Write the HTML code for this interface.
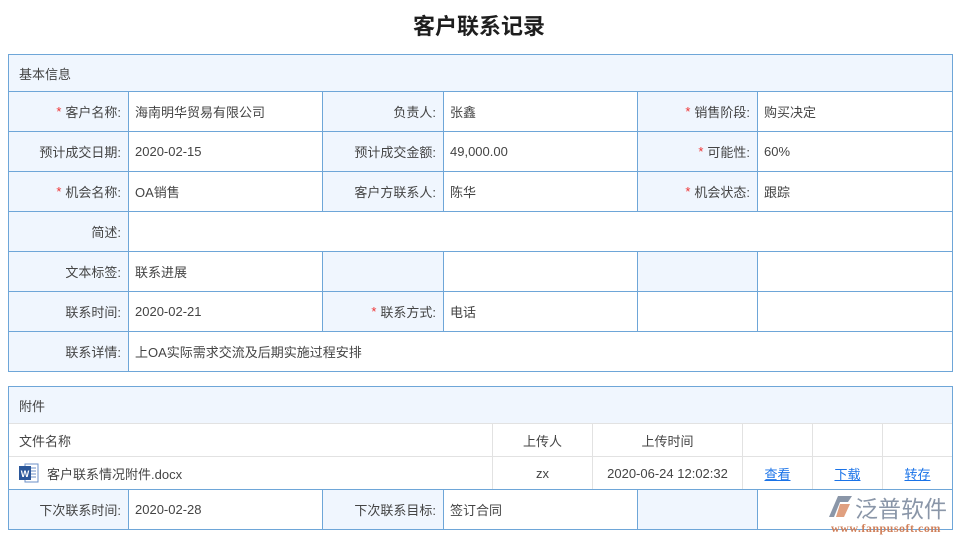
<!DOCTYPE html>
<html><head><meta charset="utf-8"><style>
*{margin:0;padding:0;box-sizing:border-box}
body{width:958px;height:541px;background:#fff;font-family:"Liberation Sans","Noto Sans CJK SC",sans-serif;font-size:13px;color:#444;position:relative;overflow:hidden}
.c{position:absolute;display:flex;align-items:center;white-space:nowrap}
.t{position:absolute;left:0;top:9px;width:958px;text-align:center;font-size:22px;font-weight:bold;color:#1e1e1e}
.box{position:absolute;border:1px solid #6ea6d8}
.lb{background:#f0f6fe;justify-content:flex-end;padding-right:7px}
.v{padding-left:7px}
.hl{position:absolute;height:1px;background:#6ea6d8}
.vl{position:absolute;width:1px;background:#6ea6d8}
.ghl{position:absolute;height:1px;background:#e2e2e2}
.gvl{position:absolute;width:1px;background:#e2e2e2}
.s{color:#e33;margin-right:4px}
a{color:#1a73e8;text-decoration:underline}
</style></head><body>
<div class="t">客户联系记录</div>

<div class="box" style="left:8px;top:54px;width:945px;height:318px"></div>
<div class="c" style="left:9px;top:55px;width:943px;height:36px;background:#f0f6fe;padding-left:10px">基本信息</div>
<div class="c lb" style="left:9px;top:92px;width:119px;height:279px"></div>
<div class="c lb" style="left:323px;top:92px;width:120px;height:119px"></div>
<div class="c lb" style="left:638px;top:92px;width:119px;height:119px"></div>
<div class="c lb" style="left:323px;top:252px;width:120px;height:79px"></div>
<div class="c lb" style="left:638px;top:252px;width:119px;height:39px"></div>
<div class="hl" style="left:8px;top:91px;width:945px"></div>
<div class="hl" style="left:8px;top:131px;width:945px"></div>
<div class="hl" style="left:8px;top:171px;width:945px"></div>
<div class="hl" style="left:8px;top:211px;width:945px"></div>
<div class="hl" style="left:8px;top:251px;width:945px"></div>
<div class="hl" style="left:8px;top:291px;width:945px"></div>
<div class="hl" style="left:8px;top:331px;width:945px"></div>
<div class="vl" style="left:128px;top:91px;height:281px"></div>
<div class="vl" style="left:322px;top:91px;height:120px"></div>
<div class="vl" style="left:443px;top:91px;height:120px"></div>
<div class="vl" style="left:637px;top:91px;height:120px"></div>
<div class="vl" style="left:757px;top:91px;height:120px"></div>
<div class="vl" style="left:322px;top:251px;height:80px"></div>
<div class="vl" style="left:443px;top:251px;height:80px"></div>
<div class="vl" style="left:637px;top:251px;height:80px"></div>
<div class="vl" style="left:757px;top:251px;height:80px"></div>
<div class="c lb" style="left:9px;top:92px;width:119px;height:39px;background:none"><span class="s">*</span>客户名称:</div>
<div class="c v" style="left:128px;top:92px;height:39px">海南明华贸易有限公司</div>
<div class="c lb" style="left:323px;top:92px;width:120px;height:39px;background:none">负责人:</div>
<div class="c v" style="left:443px;top:92px;height:39px">张鑫</div>
<div class="c lb" style="left:638px;top:92px;width:119px;height:39px;background:none"><span class="s">*</span>销售阶段:</div>
<div class="c v" style="left:757px;top:92px;height:39px">购买决定</div>

<div class="c lb" style="left:9px;top:132px;width:119px;height:39px;background:none">预计成交日期:</div>
<div class="c v" style="left:128px;top:132px;height:39px">2020-02-15</div>
<div class="c lb" style="left:323px;top:132px;width:120px;height:39px;background:none">预计成交金额:</div>
<div class="c v" style="left:443px;top:132px;height:39px">49,000.00</div>
<div class="c lb" style="left:638px;top:132px;width:119px;height:39px;background:none"><span class="s">*</span>可能性:</div>
<div class="c v" style="left:757px;top:132px;height:39px">60%</div>

<div class="c lb" style="left:9px;top:172px;width:119px;height:39px;background:none"><span class="s">*</span>机会名称:</div>
<div class="c v" style="left:128px;top:172px;height:39px">OA销售</div>
<div class="c lb" style="left:323px;top:172px;width:120px;height:39px;background:none">客户方联系人:</div>
<div class="c v" style="left:443px;top:172px;height:39px">陈华</div>
<div class="c lb" style="left:638px;top:172px;width:119px;height:39px;background:none"><span class="s">*</span>机会状态:</div>
<div class="c v" style="left:757px;top:172px;height:39px">跟踪</div>

<div class="c lb" style="left:9px;top:212px;width:119px;height:39px;background:none">简述:</div>

<div class="c lb" style="left:9px;top:252px;width:119px;height:39px;background:none">文本标签:</div>
<div class="c v" style="left:128px;top:252px;height:39px">联系进展</div>

<div class="c lb" style="left:9px;top:292px;width:119px;height:39px;background:none">联系时间:</div>
<div class="c v" style="left:128px;top:292px;height:39px">2020-02-21</div>
<div class="c lb" style="left:323px;top:292px;width:120px;height:39px;background:none"><span class="s">*</span>联系方式:</div>
<div class="c v" style="left:443px;top:292px;height:39px">电话</div>

<div class="c lb" style="left:9px;top:332px;width:119px;height:39px;background:none">联系详情:</div>
<div class="c v" style="left:128px;top:332px;height:39px">上OA实际需求交流及后期实施过程安排</div>

<div class="box" style="left:8px;top:386px;width:945px;height:144px"></div>
<div class="c" style="left:9px;top:387px;width:943px;height:36px;background:#f0f6fe;padding-left:10px">附件</div>
<div class="ghl" style="left:9px;top:423px;width:943px"></div>
<div class="ghl" style="left:9px;top:456px;width:943px"></div>
<div class="gvl" style="left:492px;top:423px;height:66px"></div>
<div class="gvl" style="left:592px;top:423px;height:66px"></div>
<div class="gvl" style="left:742px;top:423px;height:66px"></div>
<div class="gvl" style="left:812px;top:423px;height:66px"></div>
<div class="gvl" style="left:882px;top:423px;height:66px"></div>
<div class="c" style="left:19px;top:424px;height:32px">文件名称</div>
<div class="c" style="left:493px;top:424px;width:99px;height:32px;justify-content:center">上传人</div>
<div class="c" style="left:593px;top:424px;width:149px;height:32px;justify-content:center">上传时间</div>
<div class="c" style="left:19px;top:457px;height:32px">
<svg width="20" height="20" viewBox="0 0 20 20" style="margin-right:8px"><rect x="6" y="1" width="13" height="18" fill="#fff" stroke="#6b8fc7"/><line x1="9" y1="5" x2="17" y2="5" stroke="#6b8fc7"/><line x1="9" y1="8" x2="17" y2="8" stroke="#6b8fc7"/><line x1="9" y1="11" x2="17" y2="11" stroke="#6b8fc7"/><line x1="9" y1="14" x2="17" y2="14" stroke="#6b8fc7"/><rect x="0" y="3" width="12" height="14" fill="#2b579a"/><text x="6" y="14" font-size="9" font-weight="bold" fill="#fff" text-anchor="middle" font-family="Liberation Sans">W</text></svg>
客户联系情况附件.docx</div>
<div class="c" style="left:493px;top:457px;width:99px;height:32px;justify-content:center">zx</div>
<div class="c" style="left:593px;top:457px;width:149px;height:32px;justify-content:center">2020-06-24 12:02:32</div>
<div class="c" style="left:743px;top:457px;width:69px;height:32px;justify-content:center"><a>查看</a></div>
<div class="c" style="left:813px;top:457px;width:69px;height:32px;justify-content:center"><a>下载</a></div>
<div class="c" style="left:883px;top:457px;width:69px;height:32px;justify-content:center"><a>转存</a></div>
<div class="hl" style="left:8px;top:489px;width:945px"></div>
<div class="c lb" style="left:9px;top:490px;width:119px;height:39px">下次联系时间:</div>
<div class="vl" style="left:128px;top:489px;height:41px"></div>
<div class="c v" style="left:128px;top:490px;height:39px">2020-02-28</div>
<div class="c lb" style="left:323px;top:490px;width:120px;height:39px">下次联系目标:</div>
<div class="vl" style="left:322px;top:489px;height:41px"></div>
<div class="vl" style="left:443px;top:489px;height:41px"></div>
<div class="c v" style="left:443px;top:490px;height:39px">签订合同</div>
<div class="vl" style="left:637px;top:489px;height:41px"></div>
<div class="c lb" style="left:638px;top:490px;width:119px;height:39px"></div>
<div class="vl" style="left:757px;top:489px;height:41px"></div>

<svg style="position:absolute;left:828px;top:495px" width="26" height="24" viewBox="0 0 26 24"><path d="M10 1 L24 1 L20 7 L12 7 L6 22 L1 22 Z" fill="#8a96a8"/><path d="M12 9 L22 9 L16 22 L8 22 Z" fill="#e0a080"/></svg>
<div class="c" style="left:855px;top:493px;height:28px;font-size:23px;color:#8a96a8">泛普软件</div>
<div class="c" style="left:831px;top:521px;height:14px;font-size:12px;color:#d0805a;font-family:'Liberation Serif',serif;font-weight:bold;letter-spacing:0.5px">www.fanpusoft.com</div>
</body></html>
